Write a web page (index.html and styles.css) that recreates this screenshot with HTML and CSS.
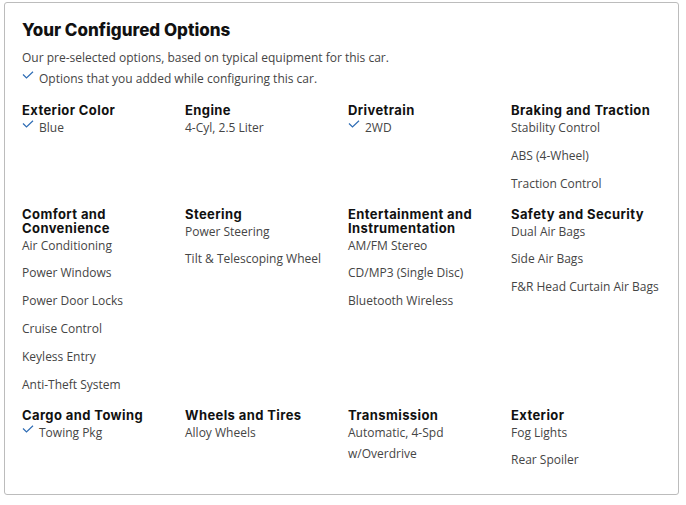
FILE: index.html
```html
<!DOCTYPE html>
<html lang="en">
<head>
<meta charset="utf-8">
<title>Your Configured Options</title>
<link rel="stylesheet" href="styles.css">
</head>
<body>
<section class="card">
  <h2 class="title">Your Configured Options</h2>
  <p class="note">Our pre-selected options, based on typical equipment for this car.</p>
  <p class="note"><svg class="check" viewBox="0 0 12 8"><polyline points="1,3.5 4.5,7 11,0.8"/></svg>Options that you added while configuring this car.</p>
  <div class="grid">
    <div class="group">
      <h3>Exterior Color</h3>
      <ul>
        <li class="added"><svg class="check" viewBox="0 0 12 8"><polyline points="1,3.5 4.5,7 11,0.8"/></svg>Blue</li>
      </ul>
    </div>
    <div class="group">
      <h3>Engine</h3>
      <ul><li>4-Cyl, 2.5 Liter</li></ul>
    </div>
    <div class="group">
      <h3>Drivetrain</h3>
      <ul>
        <li class="added"><svg class="check" viewBox="0 0 12 8"><polyline points="1,3.5 4.5,7 11,0.8"/></svg>2WD</li>
      </ul>
    </div>
    <div class="group">
      <h3>Braking and Traction</h3>
      <ul><li>Stability Control</li><li>ABS (4-Wheel)</li><li>Traction Control</li></ul>
    </div>

    <div class="group">
      <h3>Comfort and Convenience</h3>
      <ul><li>Air Conditioning</li><li>Power Windows</li><li>Power Door Locks</li><li>Cruise Control</li><li>Keyless Entry</li><li>Anti-Theft System</li></ul>
    </div>
    <div class="group">
      <h3>Steering</h3>
      <ul><li>Power Steering</li><li>Tilt &amp; Telescoping Wheel</li></ul>
    </div>
    <div class="group">
      <h3>Entertainment and Instrumentation</h3>
      <ul><li>AM/FM Stereo</li><li>CD/MP3 (Single Disc)</li><li>Bluetooth Wireless</li></ul>
    </div>
    <div class="group">
      <h3>Safety and Security</h3>
      <ul><li>Dual Air Bags</li><li>Side Air Bags</li><li>F&amp;R Head Curtain Air Bags</li></ul>
    </div>

    <div class="group">
      <h3>Cargo and Towing</h3>
      <ul>
        <li class="added"><svg class="check" viewBox="0 0 12 8"><polyline points="1,3.5 4.5,7 11,0.8"/></svg>Towing Pkg</li>
      </ul>
    </div>
    <div class="group">
      <h3>Wheels and Tires</h3>
      <ul><li>Alloy Wheels</li></ul>
    </div>
    <div class="group">
      <h3>Transmission</h3>
      <ul><li>Automatic, 4-Spd w/Overdrive</li></ul>
    </div>
    <div class="group">
      <h3>Exterior</h3>
      <ul><li>Fog Lights</li><li>Rear Spoiler</li></ul>
    </div>
  </div>
</section>
</body>
</html>
```
FILE: styles.css
```css
html, body {
  margin: 0;
  padding: 0;
  background: #ffffff;
}
body {
  padding: 2px 7px 0 4px;
  font-family: "Open Sans", "Liberation Sans", sans-serif;
  color: #454545;
}
.card {
  box-sizing: border-box;
  width: 675px;
  height: 493px;
  border: 1px solid #bcbcbc;
  border-radius: 3px;
  padding: 16px 0 0 17px;
}
.title {
  margin: 0 0 6px;
  font-family: Inter, "DejaVu Sans", sans-serif;
  font-weight: 800;
  font-size: 17px;
  line-height: 22px;
  color: #111111;
}
.note {
  margin: 0;
  font-size: 12px;
  line-height: 21px;
}
.check {
  width: 12px;
  height: 8px;
  margin: 0 5px 0 0;
  vertical-align: 4px;
  fill: none;
  stroke: #2f6db5;
  stroke-width: 1.2;
}
.grid {
  display: grid;
  grid-template-columns: repeat(4, 163px);
  row-gap: 13px;
  margin-top: 14px;
}
.group h3 {
  margin: 0;
  font-family: Inter, "DejaVu Sans", sans-serif;
  font-weight: 700;
  font-size: 13px;
  line-height: 14px;
  letter-spacing: 0.4px;
  color: #111111;
  padding-right: 20px;
}
.group ul {
  list-style: none;
  margin: 0;
  padding: 0;
  display: flex;
  flex-direction: column;
  gap: 6.8px;
}
.group li {
  font-size: 12px;
  line-height: 21px;
  padding-right: 8px;
}
```
